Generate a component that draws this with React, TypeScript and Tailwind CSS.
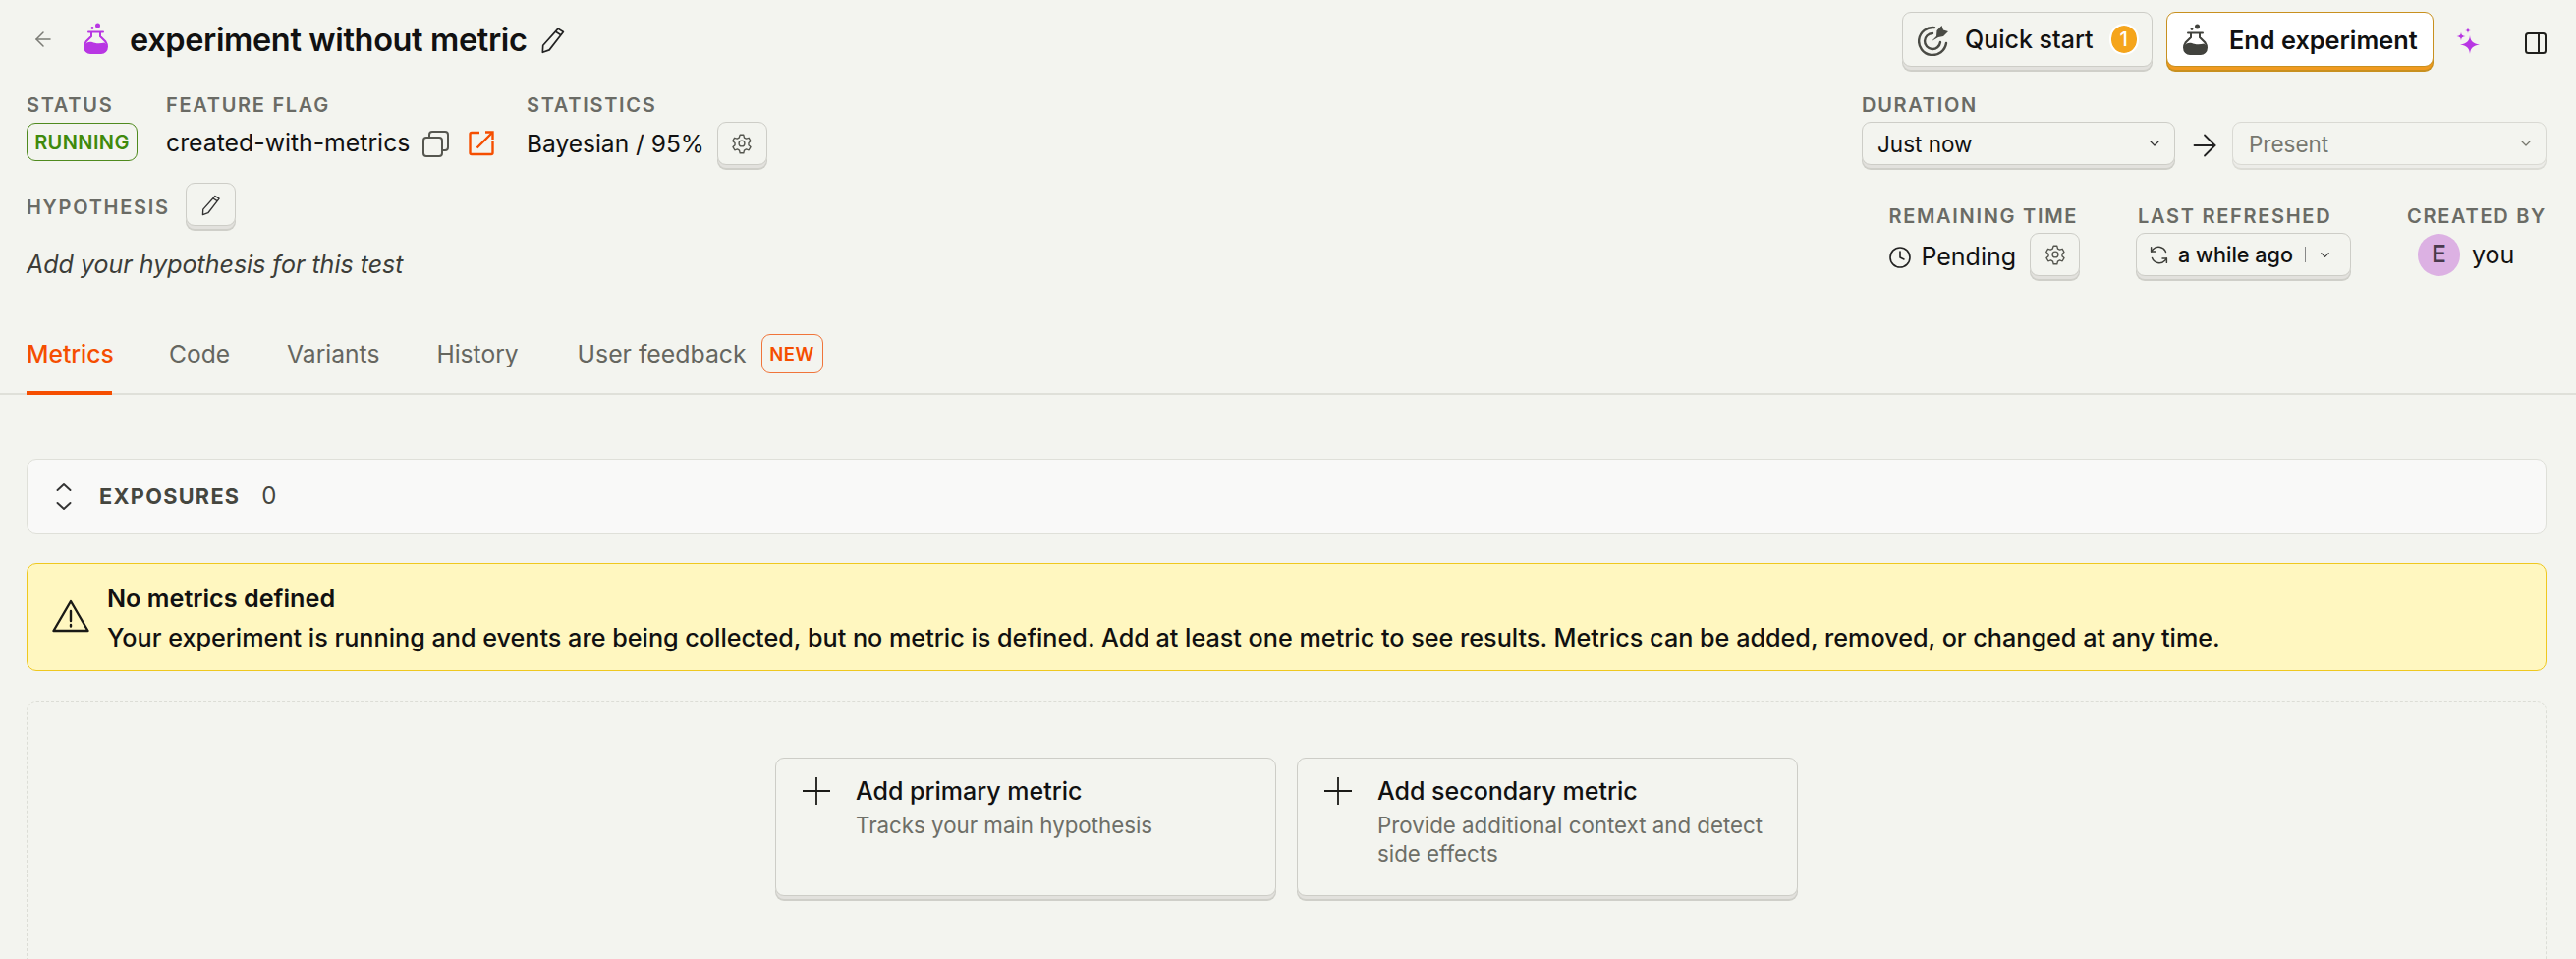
import React from 'react';
import { ChevronDown, ArrowRight, ArrowLeft, Clock } from 'lucide-react';

// depth shadow that the raised buttons share
const raised = 'border border-[#cdcdc7] rounded-[9px] shadow-[0_4px_0_-1px_#e2e1dd,0_5px_0_0_#cfcfc9]';

const Label: React.FC<{ children: React.ReactNode; className?: string }> = ({ children, className = '' }) => (
  <div className={`h-[20px] text-[20px] leading-[20px] font-semibold tracking-[0.085em] text-[#6a6b65] whitespace-nowrap ${className}`}>
    {children}
  </div>
);

const PencilIcon: React.FC<{ className?: string }> = ({ className }) => (
  <svg viewBox="0 0 24 24" fill="none" stroke="currentColor" strokeWidth="1.4" strokeLinejoin="round" className={className}>
    <path d="M16.6 2.6 21 5.4 9.2 20.6 3.6 22.6 3.9 16.8Z" />
    <path d="M14.6 5.2 19 8" />
  </svg>
);

const GearIcon: React.FC<{ className?: string }> = ({ className }) => (
  <svg viewBox="0 0 24 24" fill="none" stroke="currentColor" strokeWidth="1.5" strokeLinejoin="round" className={className}>
    <path d="M10 2.500h4l.7 3 2.200 1.200 2.900-.9 2 3.500-2.200 2.100v2.400l2.200 2.100-2 3.500-2.900-.9-2.200 1.200-.7 3h-4l-.7-3-2.200-1.200-2.900.9-2-3.500 2.200-2.100v-2.400L1.900 9.300l2-3.500 2.900.9L9 5.500Z" />
    <circle cx="12" cy="12" r="3.200" />
  </svg>
);

const GearButton: React.FC = () => (
  <button className={`${raised} w-[51px] h-[44px] flex items-center justify-center text-[#55564f] shrink-0`}>
    <GearIcon className="w-[22px] h-[22px]" />
  </button>
);

const FlaskIcon: React.FC<{ className?: string }> = ({ className }) => (
  <svg viewBox="0 0 25 32" fill="none" className={className}>
    <circle cx="14.500" cy="3" r="2.500" fill="currentColor" />
    <circle cx="9" cy="5.500" r="1.400" fill="currentColor" />
    <path d="M5 9.500h15" stroke="currentColor" strokeWidth="2" strokeLinecap="round" />
    <path d="M8 9.500v4.500L2.500 19.500C1.500 21 1 22.500 1 24.500c0 4 3 6.500 6 6.500h11c3 0 6-2.500 6-6.500 0-2-.5-3.500-1.500-5L17 14V9.500" stroke="currentColor" strokeWidth="2" />
    <path d="M3.500 20.500c3-1.500 5-.7 8 .2s6 .8 10-.2c1.500 1.500 2.500 2.500 2.500 4.500 0 4-3 6-6 6H7c-3 0-6-2-6-6 0-2 1-3.500 2.500-4.500Z" fill="currentColor" />
  </svg>
);

const Sparkles: React.FC<{ className?: string }> = ({ className }) => (
  <svg viewBox="0 0 24 29" fill="currentColor" className={className}>
    <path d="M14 10c.6 5.500 2 8 10 9.500-8 1.500-9.400 4-10 9.500-.6-5.500-2-8-10-9.500 8-1.500 9.400-4 10-9.500Z" />
    <path d="M5 6.500c.3 3 1 3.900 4.500 4.500-3.500.6-4.200 1.500-4.500 4.500-.3-3-1-3.900-4.500-4.500C4 10.400 4.700 9.500 5 6.500Z" />
    <path d="M12 2c.2 2 .7 2.600 3 3-2.300.4-2.800 1-3 3-.2-2-.7-2.600-3-3 2.300-.4 2.800-1 3-3Z" />
  </svg>
);

const PlusIcon: React.FC = () => (
  <svg viewBox="0 0 28 28" fill="none" stroke="#1a1a17" strokeWidth="1.800" className="w-[28px] h-[28px] shrink-0 mr-[26px] mt-[2px]">
    <path d="M14 0v28M0 14h28" />
  </svg>
);

export default function App() {
  return (
    <div className="w-full h-[976px] overflow-hidden bg-[#f3f4ef] pt-[12px] text-[#111] font-['Inter',sans-serif]">
      <div className="flex justify-between pl-[27px] pr-[30px]">
        <div>
          <div className="h-[56px] flex items-center pl-[5px]">
            <ArrowLeft className="w-[24px] h-[24px] text-[#7b7c76]" strokeWidth={1.5} />
            <FlaskIcon className="w-[25px] h-[32px] ml-[29px] mb-[2px] text-[#b836e3]" />
            <h1 className="ml-[22px] pt-[2px] text-[32.500px] leading-[40px] font-semibold whitespace-nowrap tracking-[-0.011em]">experiment without metric</h1>
            <PencilIcon className="w-[29px] h-[29px] ml-[11px] text-[#222]" />
          </div>

          <div className="flex mt-[29px]">
            <div className="w-[142px]">
              <Label>STATUS</Label>
              <div className="mt-[8px] h-[39px] w-[113px] rounded-[9px] border border-[#4f8a1e] flex items-center justify-center text-[20px] font-semibold tracking-[0.02em] text-[#3f8a0c]">RUNNING</div>
            </div>
            <div className="w-[367px]">
              <Label>FEATURE FLAG</Label>
              <div className="mt-[7px] h-[44px] flex items-center">
                <span className="text-[24.800px] whitespace-nowrap">created-with-metrics</span>
                <svg viewBox="0 0 27 27" fill="none" stroke="#55564f" strokeWidth="2" className="w-[27px] h-[27px] ml-[13px]">
                  <rect x="1" y="7" width="19" height="19" rx="3" />
                  <path d="M7 6.500V4c0-1.700 1.300-3 3-3h13c1.700 0 3 1.300 3 3v13c0 1.700-1.300 3-3 3h-2.500" />
                </svg>
                <svg viewBox="0 0 26 26" fill="none" stroke="#f54e00" strokeWidth="2.400" className="w-[26px] h-[26px] ml-[20px]">
                  <path d="M11 2H3C2 2 1.500 2.500 1.500 3.500v19c0 1 .5 1.500 1.500 1.500h20c1 0 1.500-.5 1.500-1.500V11" />
                  <path d="M17 1.500h7.500V9" />
                  <path d="M24 2 8.500 17.500" />
                </svg>
              </div>
            </div>
            <div>
              <Label>STATISTICS</Label>
              <div className="mt-[7px] h-[44px] flex items-center">
                <span className="text-[24.500px] whitespace-nowrap mr-[13px]">Bayesian / 95%</span>
                <GearButton />
              </div>
            </div>
          </div>

          <div className="flex items-center mt-[18px] h-[44px]">
            <Label className="mt-[6px]">HYPOTHESIS</Label>
            <button className={`${raised} ml-[16px] w-[51px] h-[44px] flex items-center justify-center text-[#333]`}>
              <PencilIcon className="w-[23px] h-[23px]" />
            </button>
          </div>
          <p className="mt-[23px] text-[25px] leading-[32px] italic text-[#3c3d38] whitespace-nowrap">Add your hypothesis for this test</p>
        </div>

        <div className="w-[697px]">
          <div className="h-[56px] flex justify-end">
            <button className={`${raised} w-[255px] h-[56px] flex items-center pl-[15px] mr-[14px]`}>
              <svg viewBox="0 0 32 33" fill="none" className="w-[32px] h-[33px] text-[#4a4b45]">
                <path d="M17 4.100A14 14 0 1 0 29 20" stroke="currentColor" strokeWidth="2.400" strokeLinecap="round" />
                <path d="M15 10a8 8 0 1 0 8 9" stroke="currentColor" strokeWidth="2.400" strokeLinecap="round" />
                <path d="M14 18 19 13 19.500 7 24.500 2 26 6.500 31 8 26 13 21 14Z" fill="currentColor" />
              </svg>
              <span className="ml-[16px] pt-[2px] text-[25px] font-medium whitespace-nowrap">Quick start</span>
              <span className="ml-[18px] w-[26px] h-[28px] rounded-full bg-[#f5a51c] outline-2 outline-white flex items-center justify-center text-[20px] font-medium text-white">1</span>
            </button>
            <button className="w-[272px] h-[56px] bg-white border border-[#c8901f] rounded-[9px] shadow-[0_4px_0_-1px_#f09a1f,0_5px_0_0_#c8901f] flex items-center pl-[16px]">
              <FlaskIcon className="w-[25px] h-[32px] text-[#41423d]" />
              <span className="ml-[22px] pt-[2px] text-[25.300px] font-semibold whitespace-nowrap">End experiment</span>
            </button>
            <Sparkles className="w-[24px] h-[29px] ml-[23px] mt-[14px] text-[#b836e3]" />
            <svg viewBox="0 0 22 22" fill="none" stroke="#1f1f1c" strokeWidth="2" className="w-[22px] h-[22px] ml-[46px] mt-[21px]">
              <rect x="1" y="1" width="20" height="20" rx="2.500" />
              <path d="M14 1v20" />
            </svg>
          </div>

          <div className="mt-[29px]">
            <Label>DURATION</Label>
            <div className="mt-[7px] flex items-center">
              <div className={`${raised} w-[319px] h-[44px] flex items-center justify-between pl-[15px] pr-[12px]`}>
                <span className="pt-[2px] text-[22.500px]">Just now</span>
                <ChevronDown className="w-[16px] h-[16px] text-[#333]" strokeWidth={1.800} />
              </div>
              <ArrowRight className="w-[36px] h-[36px] ml-[12px] mr-[10px] mt-[4px] text-[#222]" strokeWidth={1.200} />
              <div className="w-[320px] h-[44px] flex items-center justify-between pl-[16px] pr-[12px] border border-[#d9d9d3] rounded-[9px] shadow-[0_4px_0_-1px_#ecece8,0_5px_0_0_#dcdcd6]">
                <span className="pt-[2px] text-[22.500px] text-[#77786f]">Present</span>
                <ChevronDown className="w-[16px] h-[16px] text-[#77786f]" strokeWidth={1.800} />
              </div>
            </div>
          </div>

          <div className="mt-[42px] flex justify-end">
            <div>
              <Label>REMAINING TIME</Label>
              <div className="mt-[7px] h-[44px] flex items-center">
                <Clock className="w-[24px] h-[24px] mt-[5px] text-[#222]" strokeWidth={1.600} />
                <span className="ml-[9px] mr-[14px] mt-[6px] text-[25px]">Pending</span>
                <GearButton />
              </div>
            </div>
            <div className="ml-[57px]">
              <Label className="ml-[2px]">LAST REFRESHED</Label>
              <div className={`${raised} mt-[7px] w-[219px] h-[44px] flex items-center pl-[12px]`}>
                <svg viewBox="0 0 24 24" fill="none" stroke="#3d3e39" strokeWidth="1.700" strokeLinecap="round" strokeLinejoin="round" className="w-[21px] h-[21px]">
                  <path d="M20 8.500A9 9 0 0 0 5 5.500L3 8" />
                  <path d="M3 3v5h5" />
                  <path d="M4 15.500a9 9 0 0 0 15 3l2-2.500" />
                  <path d="M21 21v-5h-5" />
                </svg>
                <span className="ml-[9px] text-[21.600px] font-medium whitespace-nowrap">a while ago</span>
                <span className="ml-[12px] w-px h-[16px] bg-[#888]" />
                <ChevronDown className="w-[15px] h-[15px] ml-[12px] text-[#333]" strokeWidth={1.800} />
              </div>
            </div>
            <div className="ml-[57px]">
              <Label>CREATED BY</Label>
              <div className="mt-[7px] ml-[11px] flex items-center h-[44px]">
                <span className="w-[43px] h-[43px] rounded-full bg-[#dcb1e3] flex items-center justify-center text-[24px] font-semibold text-[#4a3a4d]">E</span>
                <span className="ml-[12px] pt-[2px] text-[25px]">you</span>
              </div>
            </div>
          </div>
        </div>
      </div>

      <div className="mt-[33px] h-[84px] border-b-2 border-[#dfe0d9] flex items-start gap-[58px] pl-[27px]">
        <div className="h-[84px] w-[87px] pt-[28px] border-b-4 border-[#f54e00] text-[24.600px] leading-[28px] font-medium text-[#f54e00] whitespace-nowrap">Metrics</div>
        <div className="pt-[28px] text-[24.600px] leading-[28px] text-[#65665f]">Code</div>
        <div className="pt-[28px] text-[24.600px] leading-[28px] text-[#65665f]">Variants</div>
        <div className="pt-[28px] text-[24.600px] leading-[28px] text-[#65665f]">History</div>
        <div className="ml-[2px] pt-[28px] flex text-[24.800px] leading-[28px] text-[#65665f]">
          User feedback
          <span className="ml-[15px] mt-[-6px] w-[63px] h-[40px] rounded-[9px] border border-[#f0743a] flex items-center justify-center text-[18.500px] font-semibold tracking-[0.03em] text-[#f54e00]">NEW</span>
        </div>
      </div>

      <div className="ml-[27px] mr-[30px]">
        <div className="mt-[65px] h-[76px] rounded-[10px] border border-[#dfe0d9] bg-[#f9f9f8] flex items-center pl-[29px]">
          <svg viewBox="0 0 16 27" fill="none" stroke="#333" strokeWidth="1.900" strokeLinecap="round" strokeLinejoin="round" className="w-[16px] h-[27px]">
            <path d="M1.500 7 8 1l6.500 6" />
            <path d="M1.500 20 8 26l6.500-6" />
          </svg>
          <span className="ml-[28px] text-[21.700px] font-bold tracking-[0.06em] text-[#45463f]">EXPOSURES</span>
          <span className="ml-[22px] text-[24px] text-[#45463f]">0</span>
        </div>

        <div className="mt-[30px] h-[110px] rounded-[10px] border border-[#efc81f] bg-[#fff7c0] flex items-center pl-[25px]">
          <svg viewBox="0 0 38 34" fill="none" stroke="#1a1a17" strokeWidth="2.400" strokeLinejoin="round" className="w-[38px] h-[34px] mb-[3px]">
            <path d="M19 2 36.500 32H1.500Z" />
            <path d="M19 12v10M19 26v1.500" strokeLinecap="round" />
          </svg>
          <div className="ml-[18px] pt-[2px]">
            <div className="text-[25.200px] leading-[36px] font-semibold">No metrics defined</div>
            <div className="mt-[4px] text-[25.200px] leading-[36px] font-medium whitespace-nowrap">Your experiment is running and events are being collected, but no metric is defined. Add at least one metric to see results. Metrics can be added, removed, or changed at any time.</div>
          </div>
        </div>

        <div className="mt-[30px] h-[400px] rounded-[10px] border border-dashed border-[#dcddd6] flex justify-center gap-[21px] pt-[57px]">
          <div className={`${raised} w-[510px] h-[141px] flex pl-[27px] pt-[17px]`}>
            <PlusIcon />
            <div>
              <div className="text-[25px] leading-[32px] font-medium">Add primary metric</div>
              <div className="mt-[4px] text-[22.300px] leading-[29px] text-[#6d6e67]">Tracks your main hypothesis</div>
            </div>
          </div>
          <div className={`${raised} w-[510px] h-[141px] flex pl-[27px] pt-[17px]`}>
            <PlusIcon />
            <div>
              <div className="text-[25px] leading-[32px] font-medium">Add secondary metric</div>
              <div className="mt-[4px] w-[420px] text-[22.300px] leading-[29px] text-[#6d6e67]">Provide additional context and detect side effects</div>
            </div>
          </div>
        </div>
      </div>
    </div>
  );
}
